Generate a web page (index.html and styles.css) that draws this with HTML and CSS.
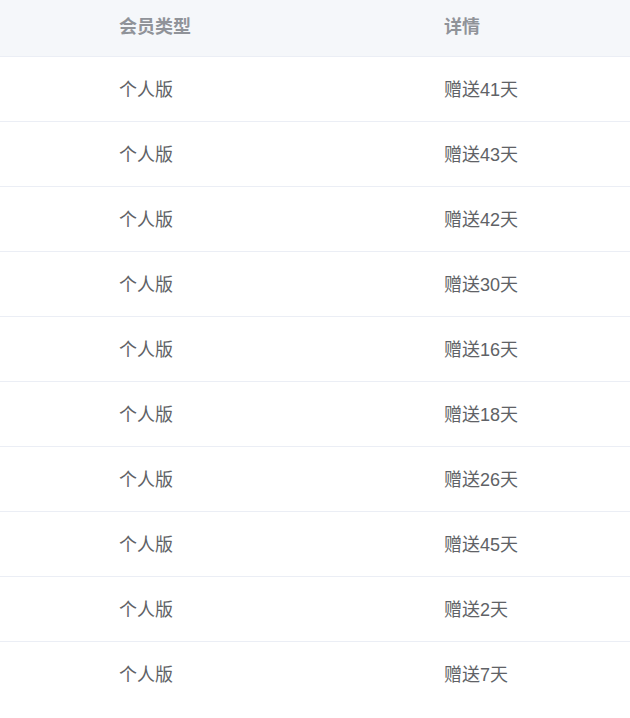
FILE: index.html
```html
<!DOCTYPE html>
<html lang="zh">
<head>
<meta charset="utf-8">
<link rel="stylesheet" href="styles.css">
</head>
<body>
<div class="table">
  <div class="row head"><div class="c1">会员类型</div><div class="c2">详情</div></div>
  <div class="row"><div class="c1">个人版</div><div class="c2">赠送41天</div></div>
  <div class="row"><div class="c1">个人版</div><div class="c2">赠送43天</div></div>
  <div class="row"><div class="c1">个人版</div><div class="c2">赠送42天</div></div>
  <div class="row"><div class="c1">个人版</div><div class="c2">赠送30天</div></div>
  <div class="row"><div class="c1">个人版</div><div class="c2">赠送16天</div></div>
  <div class="row"><div class="c1">个人版</div><div class="c2">赠送18天</div></div>
  <div class="row"><div class="c1">个人版</div><div class="c2">赠送26天</div></div>
  <div class="row"><div class="c1">个人版</div><div class="c2">赠送45天</div></div>
  <div class="row"><div class="c1">个人版</div><div class="c2">赠送2天</div></div>
  <div class="row"><div class="c1">个人版</div><div class="c2">赠送7天</div></div>
</div>
</body>
</html>
```
FILE: styles.css
```css
html, body { margin: 0; padding: 0; background: #fff; }
body { font-family: "Liberation Sans", "Noto Sans CJK SC", sans-serif; font-size: 18px; color: #606266; }
.table { width: 630px; }
.row { display: grid; grid-template-columns: 325px 1fr; height: 64px; padding-bottom: 3px; box-sizing: content-box; align-items: center; border-bottom: 1px solid #ebeef5; }
.row:not(.head) { height: 61px; }
.row:last-child { border-bottom: none; }
.row.head { height: 57px; padding-bottom: 6px; box-sizing: border-box; background: #f5f7fa; color: #909399; font-weight: bold; }
.c1 { padding-left: 119px; }
.c2 { padding-left: 119px; }
```
